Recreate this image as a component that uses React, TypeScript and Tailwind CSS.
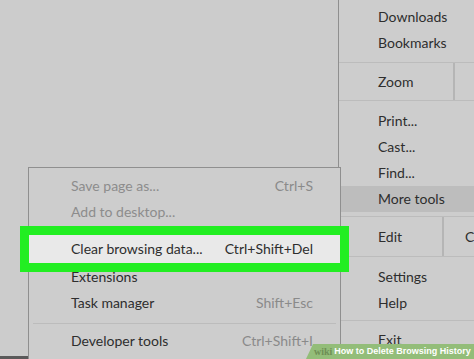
import React from "react";

const font = { fontFamily: "Lato, 'Open Sans', sans-serif" };

const MainItem = ({ label, active }: { label: string; active?: boolean }) => (
  <div className={`h-[26px] flex items-center pl-[39px] whitespace-nowrap ${active ? "bg-[#bdbdbd]" : ""}`}>
    {label}
  </div>
);

const SubItem = ({ label, keys, dim }: { label: string; keys?: string; dim?: boolean }) => (
  <div
    className={`h-[26px] flex items-center justify-between pl-[42px] pr-[27px] whitespace-nowrap ${
      dim ? "text-[#8c8c8c]" : "text-[#2e2e2e]"
    }`}
  >
    <span>{label}</span>
    {keys && <span className="text-[#8a8a8a]">{keys}</span>}
  </div>
);

export default function App() {
  return (
    <div
      className="relative w-[474px] h-[359px] bg-[#cccccc] overflow-hidden flex text-[14px] text-[#2e2e2e] leading-none"
      style={font}
    >
      {/* page behind the menu */}
      <div className="w-[338px] shrink-0" />

      {/* Chrome main menu */}
      <div className="flex-1 border-l border-[#8f8f8f] bg-[#cdcdcd] flex flex-col pt-[4px]">
        <MainItem label="Downloads" />
        <MainItem label="Bookmarks" />
        <div className="h-[7px] border-b border-[#bcbcbc]" />
        <div className="h-[38px] flex border-b border-[#bcbcbc]">
          <div className="w-[116px] flex items-center pl-[39px] border-r-2 border-[#b5b5b5]">Zoom</div>
        </div>
        <div className="h-[7px]" />
        <MainItem label="Print..." />
        <MainItem label="Cast..." />
        <MainItem label="Find..." />
        <MainItem label="More tools" active />
        <div className="h-[5px] border-b border-[#bcbcbc]" />
        <div className="h-[40px] flex border-b border-[#bcbcbc]">
          <div className="w-[105px] flex items-center pl-[39px] border-r-2 border-[#b5b5b5]">Edit</div>
          <div className="flex items-center pl-[21px]">C</div>
        </div>
        <div className="h-[7px]" />
        <MainItem label="Settings" />
        <MainItem label="Help" />
        <div className="h-[5px] border-b border-[#bcbcbc]" />
        <div className="h-[6px]" />
        <MainItem label="Exit" />
      </div>

      {/* More tools submenu */}
      <div className="absolute left-[28px] top-[167px] w-[313px] h-[200px] bg-[#cdcdcd] border border-[#8f8f8f] flex flex-col pt-[5px]">
        <SubItem label="Save page as..." keys="Ctrl+S" dim />
        <SubItem label="Add to desktop..." dim />
        <div className="h-[10px]" />
        <div className="h-[28px] bg-[#e9e9e9] outline-[9px] outline-[#22ee22] flex items-center justify-between pl-[42px] pr-[27px] whitespace-nowrap z-10">
          <span>Clear browsing data...</span>
          <span>Ctrl+Shift+Del</span>
        </div>
        <div className="h-[1px]" />
        <SubItem label="Extensions" />
        <SubItem label="Task manager" keys="Shift+Esc" />
        <div className="h-[8px] border-b border-[#bcbcbc] mx-[4px]" />
        <div className="h-[4px]" />
        <SubItem label="Developer tools" keys="Ctrl+Shift+I" />
      </div>

      <div className="absolute left-0 bottom-0 w-[28px] h-[3px] bg-[#5a5a5a]" />

      {/* wikiHow watermark */}
      <div className="absolute right-0 bottom-0 h-[15px] w-[168px] bg-[#93bd79] flex items-center pl-[8px] gap-[2px] text-[9px] font-bold leading-none whitespace-nowrap [clip-path:polygon(7px_0,100%_0,100%_100%,0_100%)]">
        <span className="text-[#6e8f55] text-[10px]" style={{ fontFamily: "'Liberation Serif', serif" }}>wiki</span>
        <span className="text-white" style={{ fontFamily: "'Liberation Sans', sans-serif" }}>How to Delete Browsing History</span>
      </div>
    </div>
  );
}
